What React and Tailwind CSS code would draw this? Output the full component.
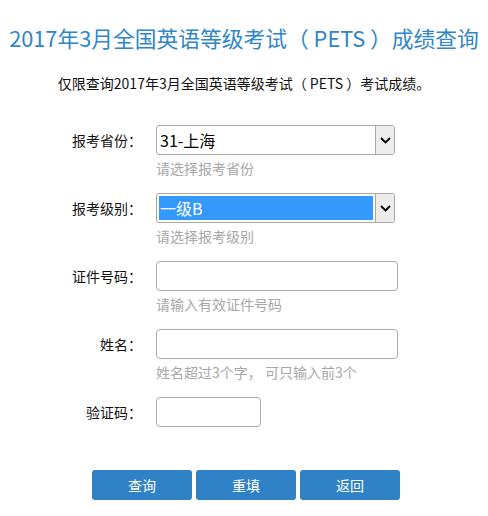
import React from 'react'

const font = { fontFamily: '"Noto Sans CJK SC", "Noto Sans", sans-serif' }

function Chevron() {
  return (
    <svg width="11" height="7" viewBox="0 0 11 7" fill="none">
      <path d="M1 1l4.5 4.5L10 1" stroke="#000" strokeWidth="1.8" />
    </svg>
  )
}

function FakeSelect({ value, active }) {
  return (
    <div className="flex h-[30px] w-[239px] rounded-[3px] border border-[#a9a9a9] bg-white overflow-hidden">
      <div className="flex-1 p-[2px]">
        <div
          className={
            active
              ? 'h-full flex items-center px-[1px] bg-[#3399ff] text-white'
              : 'h-full flex items-center px-[1px] text-black'
          }
        >
          {value}
        </div>
      </div>
      <div className="w-[19px] flex items-center justify-center bg-[#ececec] border-l border-[#a9a9a9]">
        <Chevron />
      </div>
    </div>
  )
}

function Row({ label, hint, children, last }) {
  return (
    <div className={last ? 'flex mb-[43px]' : 'flex mb-[12px]'}>
      <div className="w-[143px] h-[30px] flex items-center justify-end pr-[1px] text-[14px] text-[#111]">
        {label}
      </div>
      <div className="ml-[13px]">
        {children}
        {hint && <div className="h-[26px] leading-[26px] text-[14px] text-[#a8a8a8]">{hint}</div>}
      </div>
    </div>
  )
}

export default function App() {
  return (
    <div className="w-[488px] h-[516px] bg-white" style={font}>
      <h1 className="pt-[23px] text-center text-[21.75px] leading-[30px] text-[#2f86c9]">
        2017年3月全国英语等级考试（ PETS ）成绩查询
      </h1>
      <p className="mt-[20px] text-center text-[14px] leading-[20px] text-[#111]">
        仅限查询2017年3月全国英语等级考试（ PETS ）考试成绩。
      </p>

      <div className="mt-[32px]">
        <Row label="报考省份：" hint="请选择报考省份">
          <FakeSelect value="31-上海" />
        </Row>
        <Row label="报考级别：" hint="请选择报考级别">
          <FakeSelect value="一级B" active />
        </Row>
        <Row label="证件号码：" hint="请输入有效证件号码">
          <input className="block h-[30px] w-[242px] rounded-[4px] border border-[#aaa] bg-white outline-none" />
        </Row>
        <Row label="姓名：" hint="姓名超过3个字， 可只输入前3个">
          <input className="block h-[30px] w-[242px] rounded-[4px] border border-[#aaa] bg-white outline-none" />
        </Row>
        <Row label="验证码：" last>
          <input className="block h-[30px] w-[105px] rounded-[4px] border border-[#aaa] bg-white outline-none" />
        </Row>
      </div>

      <div className="flex gap-[4px] pl-[92px]">
        <button className="w-[100px] h-[30px] rounded-[3px] bg-[#2f82c6] text-white text-[14px]">查询</button>
        <button className="w-[100px] h-[30px] rounded-[3px] bg-[#2f82c6] text-white text-[14px]">重填</button>
        <button className="w-[100px] h-[30px] rounded-[3px] bg-[#2f82c6] text-white text-[14px]">返回</button>
      </div>
    </div>
  )
}
